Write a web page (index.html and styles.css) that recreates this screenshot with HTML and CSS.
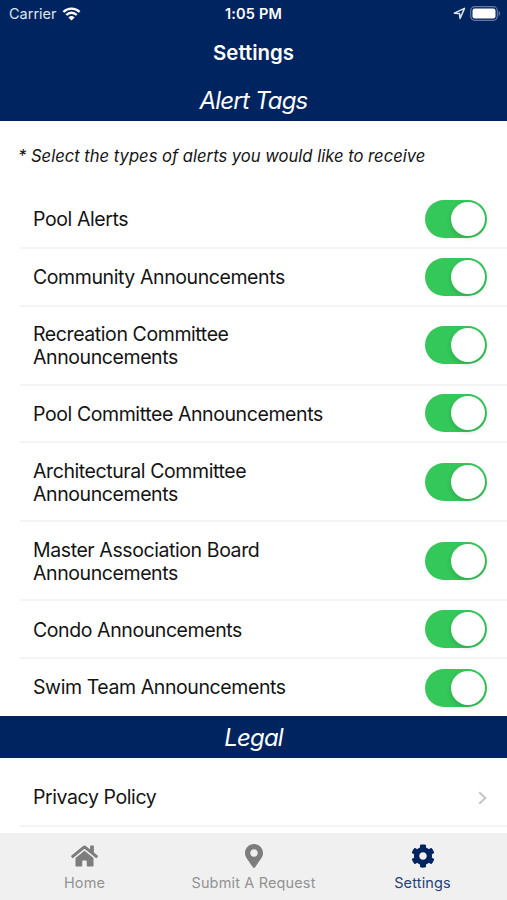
FILE: index.html
```
<!DOCTYPE html>
<html lang="en">
<head>
    <meta charset="UTF-8">
    <meta name="viewport" content="width=device-width, initial-scale=1.0">
    <title>Settings</title>
    <link rel="stylesheet" href="styles.css">
</head>
<body>
    <div class="app">
        <header class="header">
            <div class="status-bar">
                <div class="carrier">
                    <span>Carrier</span>
                    <svg class="wifi" viewBox="0 0 18 14">
                        <path d="M0.9 5a11.4 11.4 0 0 1 16.2 0M3.8 8a7.3 7.3 0 0 1 10.4 0" fill="none" stroke="#fff" stroke-width="2.4"/>
                        <path d="M9 13.6L5.9 10.5a4.5 4.5 0 0 1 6.2 0z" fill="#fff"/>
                    </svg>
                </div>
                <div class="time">1:05 PM</div>
                <div class="indicators">
                    <svg class="location" viewBox="0 0 12 12">
                        <path d="M1.2 5.7L10.6 1.3L6.5 10.6L6 6.1z" fill="none" stroke="#dfe5f2" stroke-width="1.4" stroke-linejoin="round"/>
                    </svg>
                    <svg class="battery" viewBox="0 0 31 15">
                        <rect x="0.7" y="0.7" width="26.6" height="13.6" rx="4" fill="none" stroke="#6479a3" stroke-width="1.2"/>
                        <rect x="2.5" y="2.5" width="23" height="10" rx="2.2" fill="#fff"/>
                        <path d="M28.6 5v5c2-.9 2-4.1 0-5z" fill="#6479a3"/>
                    </svg>
                </div>
            </div>
            <h1>Settings</h1>
        </header>

        <main class="content">
            <!-- Alert Tags -->
            <h2>Alert Tags</h2>
            <p class="hint">* Select the types of alerts you would like to receive</p>
            <ul class="list">
                <li><label for="pool">Pool Alerts</label><input type="checkbox" id="pool" checked></li>
                <li><label for="community">Community Announcements</label><input type="checkbox" id="community" checked></li>
                <li class="tall"><label for="recreation">Recreation Committee Announcements</label><input type="checkbox" id="recreation" checked></li>
                <li><label for="poolCommittee">Pool Committee Announcements</label><input type="checkbox" id="poolCommittee" checked></li>
                <li class="tall"><label for="architectural">Architectural Committee Announcements</label><input type="checkbox" id="architectural" checked></li>
                <li class="tall"><label for="board">Master Association Board Announcements</label><input type="checkbox" id="board" checked></li>
                <li><label for="condo">Condo Announcements</label><input type="checkbox" id="condo" checked></li>
                <li class="last"><label for="swim">Swim Team Announcements</label><input type="checkbox" id="swim" checked></li>
            </ul>

            <!-- Legal -->
            <h2>Legal</h2>
            <ul class="list legal">
                <li>
                    <span>Privacy Policy</span>
                    <svg class="chevron" viewBox="0 0 9 14">
                        <path d="M1.2 1.2L7.3 7L1.2 12.8" fill="none" stroke="#c4c4c6" stroke-width="2"/>
                    </svg>
                </li>
            </ul>
        </main>

        <nav class="tabs">
            <div class="tab">
                <svg class="home" viewBox="0 0 576 512">
                    <path d="M280.37 148.26L96 300.11V464a16 16 0 0 0 16 16l112.06-.29a16 16 0 0 0 15.92-16V368a16 16 0 0 1 16-16h64a16 16 0 0 1 16 16v95.64a16 16 0 0 0 16 16.05L464 480a16 16 0 0 0 16-16V300L295.67 148.26a12.19 12.19 0 0 0-15.3 0zM571.6 251.47L488 182.56V44.05a12 12 0 0 0-12-12h-56a12 12 0 0 0-12 12v72.61L318.47 43a48 48 0 0 0-61 0L4.34 251.47a12 12 0 0 0-1.6 16.9l25.5 31A12 12 0 0 0 45.15 301l235.22-193.74a12.19 12.19 0 0 1 15.3 0L530.9 301a12 12 0 0 0 16.9-1.6l25.5-31a12 12 0 0 0-1.7-16.93z"/>
                </svg>
                <span>Home</span>
            </div>
            <div class="tab">
                <svg class="marker" viewBox="0 0 384 512">
                    <path d="M172.268 501.67C26.97 291.031 0 269.413 0 192 0 85.961 85.961 0 192 0s192 85.961 192 192c0 77.413-26.97 99.031-172.268 309.67-9.535 13.774-29.93 13.773-39.464 0zM192 272c44.183 0 80-35.817 80-80s-35.817-80-80-80-80 35.817-80 80 35.817 80 80 80z"/>
                </svg>
                <span>Submit A Request</span>
            </div>
            <div class="tab active">
                <svg class="cog" viewBox="0 0 512 512">
                    <path d="M487.4 315.7l-42.6-24.6c4.3-23.2 4.3-47 0-70.2l42.6-24.6c4.9-2.8 7.1-8.6 5.5-14-11.1-35.6-30-67.8-54.7-94.6-3.8-4.1-10-5.1-14.8-2.3L380.8 110c-17.9-15.4-38.5-27.3-60.8-35.1V25.8c0-5.6-3.9-10.5-9.4-11.7-36.7-8.2-74.3-7.8-109.2 0-5.5 1.2-9.4 6.1-9.4 11.7V75c-22.2 7.9-42.8 19.8-60.8 35.1L88.7 85.5c-4.9-2.8-11-1.9-14.8 2.3-24.7 26.7-43.6 58.9-54.7 94.6-1.7 5.4.6 11.2 5.5 14L67.3 221c-4.3 23.2-4.3 47 0 70.2l-42.6 24.6c-4.9 2.8-7.1 8.6-5.5 14 11.1 35.6 30 67.8 54.7 94.6 3.8 4.1 10 5.1 14.8 2.3l42.6-24.6c17.9 15.4 38.5 27.3 60.8 35.1v49.2c0 5.6 3.9 10.5 9.4 11.7 36.7 8.2 74.3 7.8 109.2 0 5.5-1.2 9.4-6.1 9.4-11.7v-49.2c22.2-7.9 42.8-19.8 60.8-35.1l42.6 24.6c4.9 2.8 11 1.9 14.8-2.3 24.7-26.7 43.6-58.9 54.7-94.6 1.5-5.5-.7-11.3-5.6-14.1zM256 336c-44.1 0-80-35.9-80-80s35.9-80 80-80 80 35.9 80 80-35.9 80-80 80z"/>
                </svg>
                <span>Settings</span>
            </div>
        </nav>
    </div>
</body>
</html>
```
FILE: styles.css
```
* {
    box-sizing: border-box;
}
body {
    font-family: Inter, 'Liberation Sans', sans-serif;
    background-color: #ffffff;
    color: #141414;
    margin: 0;
}
svg {
    display: block;
}
.app {
    display: flex;
    flex-direction: column;
    height: 100vh;
    overflow: hidden;
}
.header {
    background-color: #00245f;
    color: #ffffff;
    height: 79px;
    flex-shrink: 0;
}
.status-bar {
    display: grid;
    grid-template-columns: 1fr auto 1fr;
    align-items: center;
    height: 27px;
    padding: 0 6px 0 9px;
    font-size: 14.5px;
}
.carrier {
    display: flex;
    align-items: center;
    gap: 5px;
    color: #dfe5f2;
}
.wifi {
    width: 19px;
    height: 14px;
}
.time {
    font-weight: 600;
    font-size: 14.5px;
    letter-spacing: 0.2px;
    margin-right: 3px;
}
.indicators {
    display: flex;
    align-items: center;
    justify-content: flex-end;
    gap: 4px;
}
.location {
    width: 13px;
    height: 13px;
}
.battery {
    width: 31px;
    height: 15px;
}
h1 {
    margin: 0;
    font-size: 20.4px;
    font-weight: 600;
    line-height: 51px;
    text-align: center;
}
.content {
    flex: 1;
    min-height: 0;
    overflow: hidden;
}
h2 {
    margin: 0;
    height: 42px;
    background-color: #00245f;
    color: #ffffff;
    font-size: 24px;
    font-style: italic;
    font-weight: 400;
    letter-spacing: -0.8px;
    line-height: 43px;
    text-align: center;
}
.hint {
    margin: 0;
    height: 70px;
    padding-left: 18px;
    font-size: 16.6px;
    font-style: italic;
    line-height: 70px;
    white-space: nowrap;
}
.list {
    list-style-type: none;
    margin: 0;
    padding: 0 0 0 20px;
}
.list li {
    display: flex;
    align-items: center;
    justify-content: space-between;
    height: 57.8px;
    padding: 0 20px 0 13px;
    border-bottom: 2px solid #f4f4f4;
    font-size: 19.5px;
    letter-spacing: -0.41px;
    line-height: 23px;
}
.list label {
    padding-top: 2px;
}
.list li.tall {
    height: 79px;
}
.list li.tall label {
    width: 240px;
}
.list li.last {
    height: 56.8px;
    border-bottom: none;
}
.list li.last label {
    padding-top: 0;
}
.list.legal li {
    height: 69px;
    padding-top: 13px;
}
input[type="checkbox"] {
    appearance: none;
    width: 62px;
    height: 38px;
    margin: 0;
    border-radius: 19px;
    background-color: #34c759;
    display: flex;
    align-items: center;
    justify-content: flex-end;
    padding-right: 2px;
}
input[type="checkbox"]::before {
    content: "";
    width: 34px;
    height: 34px;
    border-radius: 50%;
    background-color: #ffffff;
    box-shadow: 0 2px 5px rgba(0, 0, 0, 0.15);
}
.chevron {
    width: 9px;
    height: 14px;
}
.tabs {
    display: grid;
    grid-template-columns: repeat(3, 1fr);
    height: 67px;
    flex-shrink: 0;
    background-color: #f0f0f0;
}
.tab {
    display: flex;
    flex-direction: column;
    align-items: center;
    padding-top: 11px;
    color: #929292;
    fill: #7d7d7d;
    font-size: 14.5px;
    letter-spacing: 0.15px;
    line-height: 19px;
}
.tab svg {
    height: 24px;
    margin-bottom: 5px;
}
.home {
    width: 27px;
}
.marker {
    width: 18px;
}
.cog {
    width: 24px;
}
.tab.active {
    color: #24417a;
    fill: #00245f;
}
```
